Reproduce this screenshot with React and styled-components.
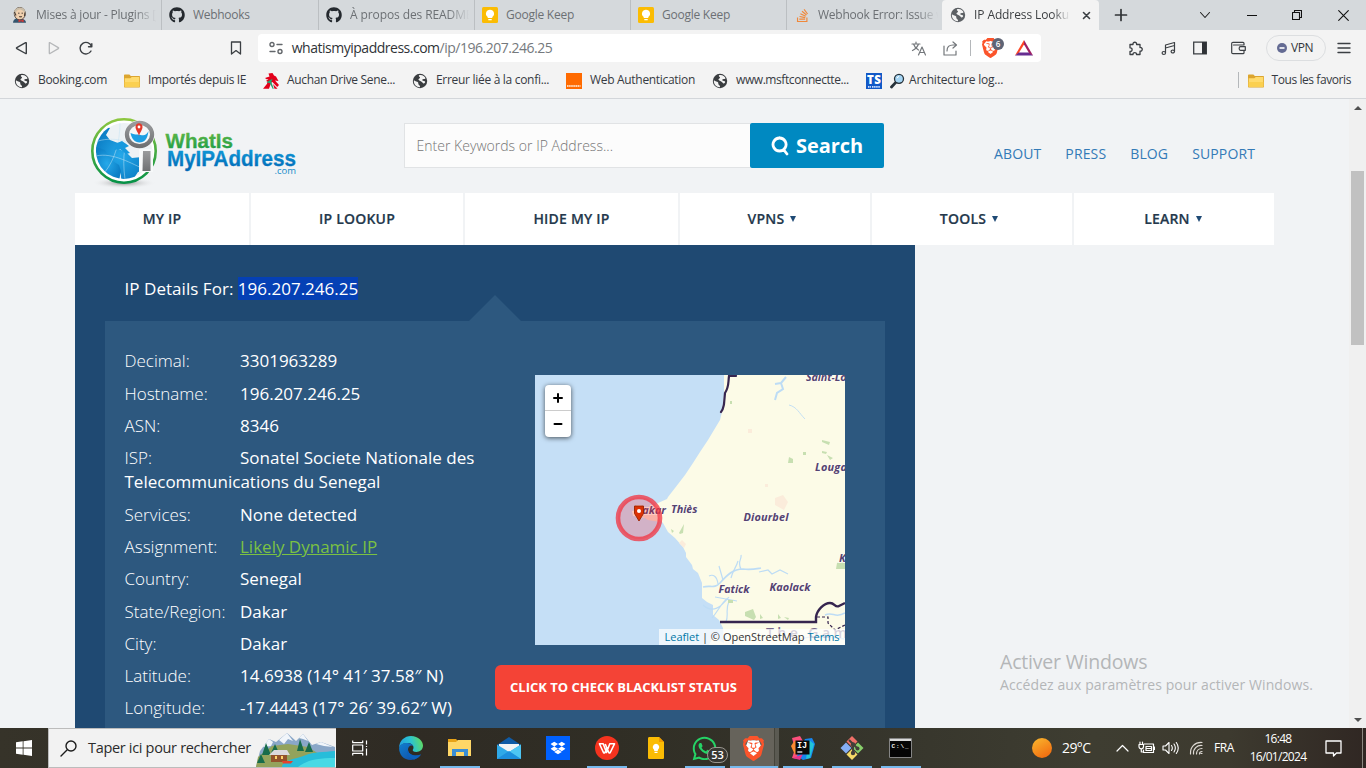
import React from "react";
import styled, { createGlobalStyle } from "styled-components";
import { FaGithub, FaDropbox, FaWhatsapp, FaStackOverflow } from "react-icons/fa6";
import { SiBrave } from "react-icons/si";

const ui = `"Open Sans", "Noto Sans", sans-serif`;
const uiSys = `"Noto Sans", "Open Sans", sans-serif`;

const GlobalStyle = createGlobalStyle`
  * { box-sizing: border-box; }
  body { margin: 0; overflow: hidden; font-family: ${ui}; }
  svg { display: block; flex: none; }
`;

const Screen = styled.div`
  width: 1366px;
  height: 768px;
  display: flex;
  flex-direction: column;
  background: #f1f3f5;
  overflow: hidden;
`;

/* ---------- browser chrome ---------- */
const TabStrip = styled.div`
  height: 30px;
  flex: none;
  display: flex;
  background: #d5d9dc;
`;
const Tab = styled.div`
  width: ${(p) => p.$w}px;
  height: 30px;
  padding-left: ${(p) => p.$pad}px;
  display: flex;
  align-items: center;
  color: #6c7074;
  font: 12px/30px ${ui};
  border-right: ${(p) => (p.$active || p.$last ? "none" : "1px solid #bbbfc2")};
  background: ${(p) => (p.$active ? "#f3f3f3" : "transparent")};
  border-radius: ${(p) => (p.$active ? "4px 4px 0 0" : "0")};
`;
const TabTitle = styled.span`
  margin-left: ${(p) => p.$gap || 8}px;
  width: ${(p) => p.$w}px;
  overflow: hidden;
  white-space: nowrap;
  letter-spacing: ${(p) => p.$ls || 0}px;
  color: ${(p) => (p.$active ? "#3c3f42" : "inherit")};
  mask-image: ${(p) => (p.$fade ? "linear-gradient(90deg, #000 82%, transparent)" : "none")};
`;
const TabClose = styled.span`
  margin-left: 12px;
`;
const NewTab = styled.div`
  margin-left: 15px;
  display: flex;
  align-items: center;
`;
const WindowControls = styled.div`
  margin-left: auto;
  display: flex;
  align-items: center;
  gap: 35.7px;
  padding-right: 17px;
`;
const Toolbar = styled.div`
  height: 36px;
  flex: none;
  display: flex;
  align-items: center;
  background: #f3f3f3;
`;
const NavButtons = styled.div`
  width: 258px;
  display: flex;
  align-items: center;
  padding: 0 16px 0 15px;
  gap: 19.5px;
`;
const Spring = styled.div`
  flex: 1;
`;
const AddressBar = styled.div`
  width: 784px;
  height: 28px;
  padding: 0 8px 0 11px;
  display: flex;
  align-items: center;
  background: #fff;
  border-radius: 4px;
`;
const Url = styled.span`
  margin-left: 9px;
  font: 14px/28px ${ui};
  letter-spacing: -0.49px;
  color: #75797d;
  white-space: nowrap;
  & b { font-weight: 400; color: #303438; }
`;
const UrlActions = styled.div`
  margin-left: auto;
  display: flex;
  align-items: center;
`;
const VSep = styled.div`
  width: 1px;
  height: 16px;
  margin: ${(p) => p.$m || "0 11px 0 12px"};
  background: #b4b7ba;
`;
const Shield = styled.div`
  position: relative;
  width: 20px;
  height: 20px;
  margin-right: 13px;
`;
const ShieldBadge = styled.span`
  position: absolute;
  left: 10px;
  top: 0;
  width: 12px;
  height: 12px;
  border-radius: 6px;
  background: #5f6475;
  color: #fff;
  font: 600 8px/12px ${ui};
  text-align: center;
`;
const Extensions = styled.div`
  flex: 1;
  display: flex;
  align-items: center;
  padding: 0 15px 0 87px;
`;
const Gap = styled.i`
  width: ${(p) => p.$w}px;
`;
const VpnPill = styled.div`
  width: 60px;
  height: 26px;
  border: 1px solid #dcdee0;
  border-radius: 13px;
  display: flex;
  align-items: center;
  padding-left: 10px;
  gap: 4px;
  font: 12px/24px ${ui};
  letter-spacing: -0.4px;
  color: #33373b;
`;
const Bookmarks = styled.div`
  height: 33px;
  flex: none;
  display: flex;
  align-items: center;
  padding: 0 15px 4px 14px;
  background: #f3f3f3;
  border-bottom: 1px solid #d3d6da;
`;
const Bookmark = styled.div`
  display: flex;
  align-items: center;
  gap: ${(p) => p.$gap || 8}px;
  width: ${(p) => p.$w}px;
  font: 12px/20px ${ui};
  letter-spacing: ${(p) => p.$ls || 0}px;
  white-space: nowrap;
  color: #363a42;
  & svg { margin-top: 1px; }
`;

/* ---------- web page ---------- */
const Viewport = styled.div`
  flex: 1;
  min-height: 0;
  display: flex;
`;
const Page = styled.main`
  width: 1349px;
  position: relative;
  padding-left: 75px;
  overflow: hidden;
`;
const Header = styled.header`
  height: 94px;
  width: 1199px;
  display: flex;
`;
const LogoBox = styled.div`
  width: 329px;
  padding: 17px 0 0 14px;
`;
const SearchForm = styled.div`
  display: flex;
  height: 45px;
  margin-top: 24px;
`;
const SearchInput = styled.div`
  width: 346px;
  height: 45px;
  padding-left: 11.5px;
  background: #fcfcfc;
  border: 1px solid #e1e3e5;
  border-right: none;
  font: 300 14px/43px ${ui};
  letter-spacing: 0.02px;
  color: #757575;
`;
const SearchButton = styled.div`
  width: 134px;
  height: 45px;
  padding-left: 21px;
  display: flex;
  align-items: center;
  gap: 7px;
  border-radius: 2px;
  background: #0089c1;
  color: #fff;
  font: 700 20px/45px ${ui};
  letter-spacing: -0.05px;
`;
const TopLinks = styled.nav`
  display: flex;
  margin: 43px 0 0 110px;
  gap: 24px;
  font: 500 14px/24px ${ui};
  letter-spacing: 0.13px;
  color: #337ab7;
`;
const MainNav = styled.nav`
  display: flex;
  gap: 2px;
  height: 52px;
`;
const NavItem = styled.div`
  width: ${(p) => p.$w}px;
  display: flex;
  justify-content: center;
  align-items: center;
  gap: 6px;
  background: #fff;
  color: #24384c;
  font: 600 14px/52px ${ui};
  letter-spacing: 0.2px;
  -webkit-text-stroke: 0.2px #24384c;
  padding-right: ${(p) => p.$pr || 0}px;
`;
const Caret = styled.i`
  border: 3.5px solid transparent;
  border-top: 6px solid #1f4a75;
  border-bottom: none;
`;
const Result = styled.section`
  width: 840px;
  height: 483px;
  padding: 32px 30px 0;
  background: #1f4972;
`;
const ResultTitle = styled.div`
  height: 44px;
  padding-left: 19.5px;
  font: 400 17px/24px ${ui};
  letter-spacing: 0.04px;
  color: #fff;
`;
const Selected = styled.span`
  background: #0540b5;
  letter-spacing: 0;
`;
const Panel = styled.div`
  position: relative;
  height: 407px;
  display: flex;
  background: #2d587f;
  padding: 28px 0 0 19.5px;
  &::before {
    content: "";
    position: absolute;
    top: -26px;
    left: 364px;
    border: 26px solid transparent;
    border-top: none;
    border-bottom-color: #2d587f;
  }
`;
const Details = styled.div`
  width: 370.5px;
  padding-top: 0.35px;
`;
const Row = styled.p`
  margin: 0 0 8px;
  color: #fff;
  font: 400 17px/24.28px ${ui};
`;
const Label = styled.span`
  display: inline-block;
  width: 115.5px;
  font-weight: 300;
`;
const Link = styled.span`
  color: #7bc143;
  text-decoration: underline;
`;
const MapColumn = styled.div`
  padding-top: 26px;
`;
const MapFrame = styled.div`
  position: relative;
  width: 310px;
  height: 270px;
  margin-left: 40px;
  overflow: hidden;
`;
const Zoom = styled.div`
  position: absolute;
  left: 10px;
  top: 10px;
  width: 26px;
  height: 52px;
  border-radius: 4px;
  background: #fff;
  box-shadow: 0 1px 5px rgba(0, 0, 0, 0.65);
`;
const ZoomButton = styled.div`
  height: 26px;
  border-bottom: ${(p) => (p.$line ? "1px solid #ccc" : "none")};
  display: flex;
  align-items: center;
  justify-content: center;
`;
const Attribution = styled.div`
  position: absolute;
  right: 0;
  bottom: 0;
  width: 186px;
  height: 16px;
  padding-left: 5.5px;
  background: rgba(255, 255, 255, 0.7);
  font: 11px/16px ${ui};
  letter-spacing: 0;
  color: #333;
  white-space: nowrap;
  & a { color: #0078a8; }
`;
const Blacklist = styled.div`
  width: 257px;
  height: 45px;
  margin-top: 20px;
  border-radius: 6px;
  background: #f44336;
  color: #fff;
  font: 700 13px/45px ${ui};
  letter-spacing: -0.01px;
  text-align: center;
`;
const Scrollbar = styled.div`
  width: 17px;
  display: flex;
  flex-direction: column;
  align-items: center;
  padding: 7px 0 6px;
  background: #f0f0f0;
`;
const Arrow = styled.i`
  border: 4px solid transparent;
  ${(p) => (p.$down ? "border-top-color: #505050; border-bottom: none;" : "border-bottom-color: #505050; border-top: none;")}
`;
const Thumb = styled.div`
  width: 13px;
  height: 174px;
  margin: 61px 0 auto;
  background: #c1c1c1;
`;
const Watermark = styled.div`
  position: absolute;
  left: 1000px;
  top: 550px;
  white-space: nowrap;
  color: #b4b6b8;
  font: 14px/20px ${ui};
  letter-spacing: 0.09px;
`;
const WatermarkTitle = styled.div`
  font: 19.5px/26px ${ui};
  letter-spacing: -0.2px;
`;

/* ---------- taskbar ---------- */
const Taskbar = styled.footer`
  height: 40px;
  flex: none;
  display: flex;
  background: linear-gradient(90deg, #363329 0%, #2f2b24 30%, #302e25 45%, #35342b 62%, #3e3d31 80%, #3d3a2f 90%, #302723 100%);
  color: #fff;
`;
const Start = styled.div`
  width: 48px;
  display: flex;
  align-items: center;
  justify-content: center;
`;
const TaskSearch = styled.div`
  width: 288px;
  height: 40px;
  display: flex;
  align-items: center;
  background: #f2f2f2;
  border: 1px solid #bcbcbc;
  border-width: 1px 0 1px 1px;
  padding-left: 11px;
  color: #2b2b2b;
  font: 14.5px/38px ${ui};
  letter-spacing: -0.32px;
  white-space: nowrap;
`;
const TaskSearchText = styled.span`
  width: 168px;
  margin-left: 11px;
`;
const TaskIcon = styled.div`
  position: relative;
  width: 49px;
  height: 40px;
  padding-right: 2px;
  display: flex;
  align-items: center;
  justify-content: center;
  background: ${(p) => (p.$focus ? "linear-gradient(90deg, #66635b 0 44px, #45443b 44px 45px, #5b5a52 45px)" : "none")};
  &::after {
    content: "";
    position: absolute;
    left: ${(p) => (p.$focus ? 0 : 4)}px;
    bottom: 0;
    width: ${(p) => (p.$focus ? 48 : 40)}px;
    height: 2px;
    background: ${(p) => (p.$open ? "#76b9ed" : "transparent")};
  }
`;
const CountBadge = styled.span`
  position: absolute;
  left: 26px;
  top: 19px;
  width: 21px;
  height: 16px;
  border: 1px solid #99968f;
  border-radius: 8px;
  background: #383732;
  font: 600 11px/14px ${ui};
  text-align: center;
`;
const Tray = styled.div`
  margin-left: auto;
  display: flex;
  align-items: center;
  font: 12px/18px ${uiSys};
  letter-spacing: -0.4px;
`;
const Temp = styled.span`
  width: 54px;
  margin-left: 10px;
  font: 14px/40px ${ui};
  letter-spacing: -0.6px;
`;
const Lang = styled.span`
  width: 34px;
  margin-left: 11px;
  font-family: ${ui};
`;
const Clock = styled.div`
  width: 60px;
  text-align: center;
  font: 12px/18px ${ui};
  letter-spacing: -0.7px;
  white-space: nowrap;
`;
const DesktopEdge = styled.div`
  width: 4px;
  height: 40px;
  margin-left: 20px;
  border-left: 1px solid #8b8780;
`;

/* ---------- icons ---------- */
const Globe = ({ c = "#3a3d40" }) => (
  <svg width="16" height="16" viewBox="0 0 16 16">
    <circle cx="8" cy="8" r="7.200" fill={c} />
    <path d="M1.900 7.200c1.600 1.600 3.300.9 4.100 2.100.7 1-.2 1.900 1 2.600.9.600 1.200 1.200 1 2.300-3.700 0-6.600-3.200-6.100-7Z" fill="#f3f3f3" />
    <path d="M7 2.200c3-.8 5.600.9 6.600 3.100-1.300 1.300-2.600.4-3.200 1.300-.5.800.2 1.400 1.500 1.400 1.500 0 1.600 1.200.7 2.100-1 1.100-1.600-.3-2.800-1.200C8.600 8 7.600 8.200 6.700 7.100 5.900 6.100 7.200 5.600 7.900 4.900c.8-.9-1.700-1.200-.9-2.700Z" fill="#f3f3f3" />
  </svg>
);
const Keep = () => (
  <svg width="16" height="16" viewBox="0 0 16 16">
    <rect width="16" height="16" rx="1.500" fill="#fbbc04" />
    <path d="M8 2.700a4 4 0 0 0-2.300 7.300v1h4.600v-1A4 4 0 0 0 8 2.700Z M6.300 11.900h3.400v1.300H6.300Z" fill="#fff" />
  </svg>
);
const Folder = () => (
  <svg width="16" height="16" viewBox="0 0 16 16">
    <path d="M0 2.600c0-.7.400-1 1-1h4.400l1.400 1.500h8.200c.6 0 1 .4 1 1V13.500c0 .6-.4 1-1 1H1c-.6 0-1-.4-1-1Z" fill="#dca52f" />
    <path d="M.7 5.200h5.600L7.800 4h7.500v9.700H.7Z" fill="#ffdb6d" />
    <path d="M.7 9h14.600v4.700H.7Z" fill="#fbd050" />
  </svg>
);
const Jenkins = () => (
  <svg width="16" height="16" viewBox="0 0 16 16">
    <path d="M1 15.800c0-2 1-3.600 3-4.300l7 .5c2 .7 2.900 2 3 3.800Z" fill="#34556e" />
    <ellipse cx="7.800" cy="6.600" rx="5.600" ry="6.200" fill="#efcfad" stroke="#4b3f37" strokeWidth=".8" />
    <path d="M2.200 8C1 3.500 4 .4 8 .4c4 .1 6 3 5.300 7.200L11.300 4C8.500 1.600 5.500 2 4 5Z" fill="#c9bda8" />
    <path d="M2.300 5 4 8.500M13 5.500 12.500 9" stroke="#4b3f37" strokeWidth="1.200" />
    <path d="M6 6.200h1.500M9.500 6.200H11M7 9.600c1 .5 2 .5 3 0" stroke="#4b3f37" strokeWidth=".9" />
    <path d="M6.500 12.200l2.500 1.200 2.600-1.200v3l-2.600-1-2.500 1Z" fill="#d33833" />
  </svg>
);
const Auchan = () => (
  <svg width="16" height="16" viewBox="0 0 16 16">
    <path d="M5.500.5 9.500 0l1.500 2.500 2 1L15.500 8 12 7.500l4 4.500-1.800 2-4.800-5L4 11.500l.5-3L3 8l2.500-2-2 .2L2 5l4.500-1.500Z" fill="#e2001a" />
    <path d="M0 15.700 4.300 10.500 8.500 9 6 15.700Z" fill="#e2001a" />
    <path d="M3.500 9.300 9.500 5.800 8.300 9l2.500 6.700H9.600L6.900 10.200Z" fill="#1fa774" />
    <path d="m10 11 4.500 4.700h-3Z" fill="#e2001a" />
  </svg>
);
const OrangeSq = () => (
  <svg width="16" height="16" viewBox="0 0 16 16">
    <path d="M0 0h16v16H0Z" fill="#ff6a00" />
    <path d="M1 13h13.500" stroke="#ffd3b0" strokeWidth="2" strokeDasharray="1.600 .5" />
  </svg>
);
const TsIcon = () => (
  <svg width="16" height="16" viewBox="0 0 16 16">
    <path d="M0 0h16v16H0Z" fill="#1259c7" />
    <text x="8" y="11" textAnchor="middle" fill="#fff" fontFamily="Open Sans" fontWeight="800" fontSize="11.500" textLength="14">TS</text>
    <path d="M2 13.800h3M6 13.800h8" stroke="#cfe0ff" strokeWidth="1.800" strokeDasharray="1.500 .6" />
  </svg>
);
const Magnifier = () => (
  <svg width="15" height="16" viewBox="0 0 15 16">
    <path d="m1.500 14 4.300-4.600" stroke="#27323a" strokeWidth="2.800" strokeLinecap="round" />
    <circle cx="9" cy="5.800" r="4.500" fill="#a5d5f4" stroke="#27323a" strokeWidth="1.300" />
    <path d="M7 5.200c.3-1 1-1.600 2-1.700" stroke="#fff" fill="none" />
  </svg>
);
const Line = ({ w = 16, h = 16, d, c = "#3b3f43", s = 1.3, ...r }) => (
  <svg width={w} height={h} viewBox={`0 0 ${w} ${h}`} fill="none" stroke={c} strokeWidth={s} strokeLinecap="round" strokeLinejoin="round" {...r}>
    <path d={d} />
  </svg>
);
const BraveMark = ({ w, h }) => (
  <svg width={w} height={h} viewBox="0 0 20 24">
    <path d="M5 4h10l2 5-3 9-4 3-4-3-3-9Z" fill="#fff" />
    <SiBrave x="-2" y="0" size={24} color="#fb542b" />
  </svg>
);

const WimiaLogo = () => (
  <svg width="210" height="76" viewBox="0 0 210 76">
    <defs>
      <linearGradient id="ring" x1="0" y1="0" x2="0" y2="1"><stop offset="0" stopColor="#8cc63f" /><stop offset="1" stopColor="#069247" /></linearGradient>
      <linearGradient id="what" x1="0" y1="0" x2="0" y2="1"><stop offset="0" stopColor="#6dbb45" /><stop offset="1" stopColor="#189c48" /></linearGradient>
      <linearGradient id="myip" x1="0" y1="0" x2="0" y2="1"><stop offset="0" stopColor="#129fdb" /><stop offset="1" stopColor="#0068b5" /></linearGradient>
      <radialGradient id="shade"><stop offset="0" stopColor="#8c8c8c" /><stop offset="1" stopColor="#f1f3f5" stopOpacity="0" /></radialGradient>
      <radialGradient id="sea"><stop offset="0" stopColor="#25a9ea" /><stop offset="1" stopColor="#0c7fc6" /></radialGradient>
      <linearGradient id="steel" x1="0" y1="0" x2="0" y2="1"><stop offset="0" stopColor="#9a9b9d" /><stop offset="1" stopColor="#6f7173" /></linearGradient>
      <clipPath id="ball"><circle cx="35" cy="35" r="28" /></clipPath>
    </defs>
    <ellipse cx="35" cy="67" rx="32" ry="5.500" fill="url(#shade)" />
    <circle cx="35" cy="35" r="31.700" fill="#fff" stroke="url(#ring)" strokeWidth="2.600" />
    <circle cx="35" cy="35" r="28" fill="#edf2f5" />
    <g clipPath="url(#ball)">
      <path d="M5 36c0-10 4-19 12-25l4 1-4 7 4 5 8 3 1 6 8 4 5 5 10-1 5 4-1 9-8 2-4 6-1 5-9 1c-5-5-1-9-5-13-3-3-9-4-10-9l-4-6-6-3Z" fill="url(#sea)" />
      <path d="M4 30l12 4 6 10 8 5 2 6-2 10C12 60 3 45 4 30Z" fill="url(#sea)" />
      <path d="M7 40c17-4 36 8 50 14M16 56c10-13 15-30 15-50M9 25c17-5 38 1 52 13M36 63c-3-22-1-40 10-54" stroke="#c4e5f5" strokeWidth=".5" fill="none" />
      <path d="M28 27l5-2 7 5-4 2 5 5-4 1-6-5-6 1Z" fill="#1799de" />
    </g>
    <rect x="50" y="33" width="14" height="23" fill="#f7f9fa" />
    <path d="M54 35h7.500v20H53.500Z" fill="url(#steel)" />
    <ellipse cx="50.500" cy="18.500" rx="15.300" ry="14.300" fill="#f7f9fa" />
    <ellipse cx="50.500" cy="18.500" rx="12.600" ry="11.600" fill="#f5f7f8" stroke="url(#steel)" strokeWidth="4.200" />
    <path d="M41.500 17c4 2 6 1 10 2 4 1 6 0 8-4-1 8-4 11.500-9 11.500s-8-4-9-9.500Z" fill="#1d9fe3" />
    <path d="M46.500 11c0-5 7-5 7 0 0 3-2.500 5-3.500 9-1-4-3.500-6-3.500-9Z" fill="#e2382a" />
    <circle cx="50" cy="11" r="1.400" fill="#fff" />
    <text x="76.500" y="31.500" fill="url(#what)" stroke="url(#what)" strokeWidth=".3" strokeLinejoin="round" fontFamily="Liberation Sans" fontWeight="700" fontSize="20.500" textLength="67.500" lengthAdjust="spacingAndGlyphs">WhatIs</text>
    <text x="78" y="49.500" fill="url(#myip)" stroke="url(#myip)" strokeWidth=".3" strokeLinejoin="round" fontFamily="Liberation Sans" fontWeight="700" fontSize="21.500" textLength="129" lengthAdjust="spacingAndGlyphs">MyIPAddress</text>
    <text x="185.500" y="57.800" fill="#168cc9" fontFamily="Open Sans" fontSize="9.500" textLength="21.500" lengthAdjust="spacingAndGlyphs">.com</text>
  </svg>
);

const MapLabel = styled.text`
  font: italic 700 11px ${ui};
  fill: #554372;
  stroke: #fdfbee;
  stroke-width: 2px;
  paint-order: stroke;
`;
const SenegalMap = () => (
  <svg width="310" height="270" viewBox="0 0 310 270">
    <path d="M0 0h310v270H0Z" fill="#c5dff6" />
    <path d="M189 0V20L187 37 185 45 173 65 165 77 158 88 150 100 140 113 133 122 132 124 123 128 117 133 97 136 98 141 112 143 122 142 128 148 133 157 140 163 148 172 151 178 151 182 157 190 158 194 163 198 167 208 167 223 172 227 178 230 178 240 184 245 188 253 189 268 178 262 174 270H310V0Z" fill="#fcfbe7" />
    <path d="M108 137l14 0 3 10-12-2-8-5Z" fill="#f8dccb" />
    <g fill="none" stroke="#bddcf5" strokeWidth="1.200">
      <path d="M251 2 246 8 248 14 242 18 240 25M246 8l-6 1" strokeWidth="2" />
      <path d="M254 30c8 2 10 8 16 14" strokeWidth=".9" />
      <path d="M168 212c8-2 11 2 17-4 7-8 13-14 23-14 8 1 12 0 18-1" strokeWidth="1.700" />
      <path d="M196 203c2-8 5-10 7-17M183 209c-1-8-5-10-9-8M188 205l-4-14M206 194c-4-7 1-10 0-14M224 197l9-2 4 4 8-4 8 4M168 230c10 9 18 2 26-8M177 243c7-8 9-15 16-20M194 226c-4 10 0 13-3 21M180 222l22 4" />
      <path d="M290 240c8-4 10 4 20-2M255 268c16-8 30-7 55-4" strokeWidth="1.500" />
    </g>
    <g fill="#c7dfb1">
      <path d="M254 82l4 2v4h-5ZM287 65l8 2-1 3-7-3ZM287 76l5 1-1 2-4-1ZM268 77h3v3h-3ZM292 80l6 3-3 2ZM302 188l8-3v9h-9ZM210 237l8-3 3 8-2 3-9-4ZM193 225h5v3h-5ZM225 239l3 4-3 1ZM243 239l3 4-3 1ZM249 242l5 1-1 2ZM144 158l5-9-1 9-3 1ZM136 154l3 2-2 2ZM195 26h2v3h-2Z" />
    </g>
    <path d="m240 123 8-3 5 7-4 8-9-5ZM213 54h4v4h-4ZM230 109h3v3h-3ZM147 165l4 4-2 4-5-5Z" fill="#fbecdb" />
    <path d="M201 1h-7c-1 8 0 11-4 17l-1 11c-1 5-1 6-3 8" fill="none" stroke="#36254f" strokeWidth="2.200" strokeLinecap="round" />
    <path d="M185 247h96V242c1-7 8-14 14-14 5 0 5 5 9 3l6-3" fill="none" stroke="#36254f" strokeWidth="2.400" />
    <path d="M282 242h11v6l7 7 10-5" fill="none" stroke="#36254f" strokeWidth="1.200" strokeDasharray="3 2" />
    <MapLabel x="271" y="6" textLength="55">Saint-Louis</MapLabel>
    <MapLabel x="280" y="96" textLength="32">Louga</MapLabel>
    <MapLabel x="136" y="137.500" textLength="26.500">Thiès</MapLabel>
    <MapLabel x="208.500" y="146" textLength="45">Diourbel</MapLabel>
    <MapLabel x="304" y="187">K</MapLabel>
    <MapLabel x="183.500" y="217.500" textLength="31">Fatick</MapLabel>
    <MapLabel x="234.500" y="215.500" textLength="41">Kaolack</MapLabel>
    <MapLabel x="100" y="139" textLength="31">Dakar</MapLabel>
    <text x="231" y="263" fill="#7a688d" fontFamily="Open Sans" fontSize="14" fontWeight="600" textLength="112">The Gambia</text>
    <circle cx="104" cy="143" r="21" fill="#ff1e2d" fillOpacity=".23" />
    <circle cx="104" cy="143" r="21" fill="none" stroke="#f2313f" strokeOpacity=".75" strokeWidth="4.600" />
    <path d="M99.500 131h9v7.500l-4.500 7.500-4.500-7.500Z" fill="#dc3104" stroke="#992400" strokeWidth=".9" />
    <circle cx="104" cy="136" r="2" fill="#fff" />
  </svg>
);

const SearchScene = () => (
  <svg width="79" height="38" viewBox="0 0 79 38">
    <path d="M4 22 13 10 20 13 31 4 40 12 47 5 56 16 65 13 79 18V38H0Z" fill="#8aa7c8" />
    <path d="m7 18 6-8 4 3-2 4ZM23 11l8-7 6 8-5-2-4 5ZM43 9l4-4 5 7-5-2ZM60 15l5-2 12 5-9-1Z" fill="#f1f5fa" />
    <path d="M2 28 16 17 32 15 52 18 63 25 40 38H0Z" fill="#93a35c" />
    <path d="M26 38c0-7 14-8 24-12 7-3 18-3 29-4v16Z" fill="#27bdda" />
    <path d="M42 38c9-7 20-9 37-9v9Z" fill="#48d9e5" />
    <path d="m10 14 5 12H6ZM5 25l4 9H1ZM19 15l4 9h-8ZM44 10l4 12h-7ZM53 13l4 10h-8Z" fill="#176c4b" />
    <path d="M15 25h16v8H15Z" fill="#93522b" />
    <path d="m13 26 5-5h13l3 5Z" fill="#dcd9dc" />
    <path d="M19 27h2v3h-2ZM25 27h2v3h-2Z" fill="#ffd36b" />
    <path d="M26 32h11l-2 2.500h-8Z" fill="#e5412e" />
  </svg>
);
const Edge = () => (
  <svg width="24" height="24" viewBox="0 0 24 24">
    <defs>
      <linearGradient id="edgeTop" x1="0" y1=".5" x2="1" y2=".3"><stop offset="0" stopColor="#219fe0" /><stop offset=".5" stopColor="#2bc3d2" /><stop offset="1" stopColor="#63dc5c" /></linearGradient>
      <linearGradient id="edgeLow" x1="0" y1="0" x2="1" y2="1"><stop offset="0" stopColor="#0f7fd0" /><stop offset="1" stopColor="#1348a0" /></linearGradient>
    </defs>
    <path d="M.1 12C.1 4.800 5.600 0 12 0c7.500 0 12 5.200 12 9.600 0 4.400-3.300 6.400-6.600 6.400-3 0-4-1.200-3.600-2.200.5-.9.7-1.500.7-2.400 0-2.500-2.400-4.500-6-4.500C4 6.900 1 9 .1 12Z" fill="url(#edgeTop)" />
    <path d="M.1 12c.6-3.300 4-5.100 8.100-5.100 3.200 0 5.400 1.500 6.100 3.200-2.500-1.700-5.300.3-5.300 3.500 0 4.700 5.700 7.400 12.900 4.900A12 12 0 0 1 12 24C4.500 24 0 18.500.1 12Z" fill="url(#edgeLow)" />
    <path d="M9 13.500c0 4.800 6 7.600 13 5-1.200 2.200-4 4.100-6.700 4.900C9 22 6.500 17 9 13.500Z" fill="#0b61bd" />
  </svg>
);
const Explorer = () => (
  <svg width="24" height="20" viewBox="0 0 24 20">
    <path d="M0 1h8l2 2h-1v3H0Z" fill="#e8a317" />
    <path d="M0 4h8l2-2h13v16H0Z" fill="#ffd767" />
    <path d="M4 18v-7h16v7h-4v-4H8v4Z" fill="#3b8ed4" />
  </svg>
);
const Mail = () => (
  <svg width="24" height="22" viewBox="0 0 24 22">
    <path d="M0 8 12 0l12 8H0Z" fill="#0f5ba6" />
    <path d="M2 7h20v9H2Z" fill="#f2f4f5" />
    <path d="M0 7.500 12 15l12-7.500V22H0Z" fill="#2fa9e8" />
    <path d="M24 7.500V22L12 15Z" fill="#4ec6f3" />
    <path d="M0 22 12 14l12 8Z" fill="#1d8fdd" />
  </svg>
);
const Wps = () => (
  <svg width="24" height="24" viewBox="0 0 24 24">
    <circle cx="12" cy="12" r="12" fill="#f5331e" />
    <path d="M3.800 7.800h4.400l3.300 8.700 3.300-8.700h4.700l-4.500 9.200h-1L10.200 8M4.500 8l4.200 9h1l2-4.500" fill="none" stroke="#fff" strokeWidth="1.600" strokeLinejoin="round" />
  </svg>
);
const KeepApp = () => (
  <svg width="16" height="22" viewBox="0 0 16 22">
    <path d="M1.500 0H11l5 5v15.500c0 1-.6 1.500-1.500 1.500h-13C.6 22 0 21.500 0 20.500v-19C0 .5.600 0 1.500 0Z" fill="#fbbc04" />
    <path d="M11 0l5 5h-5Z" fill="#f29900" />
    <path d="M8 6.800a3.400 3.400 0 0 0-1.800 6.200v1h3.600v-1A3.400 3.400 0 0 0 8 6.800ZM6.500 14.700h3V16h-3Z" fill="#fff" />
  </svg>
);
const Idea = () => (
  <svg width="24" height="24" viewBox="0 0 24 24">
    <path d="M1 2 9 0l6 10-9 13-5-1 3-9Z" fill="#fc4f7d" />
    <path d="M0 10 4 4l5 6-5 9Z" fill="#fd8a33" />
    <path d="m14 3 7-1 3 6-4 14-8 2-6-4Z" fill="#1786ef" />
    <path d="m18 4 5 4-4 14-4 1Z" fill="#22c4d7" />
    <path d="M2 22l10-4-3 6Z" fill="#e4338d" />
    <path d="M4.500 4.500h14v14h-14Z" fill="#0a0a0a" />
    <text x="6" y="11.800" fill="#fff" fontFamily="Liberation Mono" fontWeight="700" fontSize="8.500">IJ</text>
    <path d="M6.300 16h5" stroke="#fff" strokeWidth="1.200" />
  </svg>
);
const Git = () => (
  <svg width="26" height="26" viewBox="0 0 26 26">
    <path d="m13 1 5.500 5.500L13 12 7.500 6.500Z" fill="#f07068" />
    <path d="m19 7.500 5.500 5.500-5.500 5.500-5.500-5.500Z" fill="#88cf6b" />
    <path d="m13 14 5.500 5.500L13 25l-5.500-5.500Z" fill="#f6da68" />
    <path d="M7 7.500 12.500 13 7 18.500 1.500 13Z" fill="#85aef5" />
    <path d="m10 5 4 4v9M14 9l4.500 4.500" stroke="#433f3a" strokeWidth="2" fill="none" />
    <circle cx="14" cy="9.500" r="2.200" fill="#433f3a" /><circle cx="14" cy="18" r="2.200" fill="#433f3a" /><circle cx="18.500" cy="13.500" r="2" fill="#433f3a" />
  </svg>
);
const Terminal = () => (
  <svg width="23" height="20" viewBox="0 0 23 20">
    <path d="M.5.500h22v19H.5Z" fill="#050505" stroke="#858585" />
    <path d="M1 1h21v2H1Z" fill="#d9d9d9" />
    <text x="2.500" y="9.500" fill="#f0f0f0" fontFamily="Liberation Mono" fontWeight="700" fontSize="6" textLength="17">C:\_</text>
  </svg>
);
const Sun = styled.i`
  width: 20px;
  height: 20px;
  border-radius: 50%;
  background: linear-gradient(150deg, #f9b92f, #f1620c);
`;

const inactiveTabs = [
  [162, 12, <Jenkins />, "Mises à jour - Plugins [Jenkins]", 120, true, -0.2, 8],
  [157, 7, <FaGithub size={16} color="#24292e" />, "Webhooks", 120, false, -0.3, 8],
  [156, 7, <FaGithub size={16} color="#24292e" />, "À propos des README", 119, true, -0.1, 8],
  [156, 7, <Keep />, "Google Keep", 120, false, -0.25, 8],
  [156, 7, <Keep />, "Google Keep", 120, false, -0.25, 8],
  [155, 8, <FaStackOverflow size={15} color="#f0883a" />, "Webhook Error: Issue with", 120, true, -0.25, 8],
];
const bookmarks = [
  [110, <Globe />, "Booking.com", -0.33],
  [139, <Folder />, "Importés depuis IE", -0.35],
  [149, <Auchan />, "Auchan Drive Sene...", -0.32],
  [154, <Globe />, "Erreur liée à la confi...", -0.3],
  [146, <OrangeSq />, "Web Authentication", -0.31],
  [154, <Globe />, "www.msftconnectte...", -0.42],
  [24, <TsIcon />, "", 0],
  [150, <Magnifier />, "Architecture log...", -0.2, 4],
];
const navItems = [
  [174, "MY IP"], [212, "IP LOOKUP"], [213, "HIDE MY IP"],
  [190, "VPNS", 1, 6], [200, "TOOLS", 1, 6], [200, "LEARN", 1, 2],
];
const rows = [
  ["Decimal:", "3301963289"],
  ["Hostname:", "196.207.246.25"],
  ["ASN:", "8346"],
  ["ISP:", "Sonatel Societe Nationale des Telecommunications du Senegal"],
  ["Services:", "None detected"],
  ["Assignment:", <Link key="l">Likely Dynamic IP</Link>],
  ["Country:", "Senegal"],
  ["State/Region:", "Dakar"],
  ["City:", "Dakar"],
  ["Latitude:", "14.6938 (14° 41′ 37.58″ N)"],
  ["Longitude:", "-17.4443 (17° 26′ 39.62″ W)"],
];

export default function App() {
  return (
    <Screen>
      <GlobalStyle />
      <TabStrip>
        {inactiveTabs.map(([w, pad, icon, title, tw, fade, ls, gap], i) => (
          <Tab key={i} $w={w} $pad={pad} $last={i === 5}>
            {icon}
            <TabTitle $w={tw} $fade={fade} $ls={ls} $gap={gap}>{title}</TabTitle>
          </Tab>
        ))}
        <Tab $w={157} $pad={8} $active>
          <Globe c="#5c6064" />
          <TabTitle $w={96} $fade $active $ls={-0.1}>IP Address Lookup</TabTitle>
          <TabClose><Line w={9} h={9} d="M1.500 1.500l6 6M7.500 1.500l-6 6" s={1.600} /></TabClose>
        </Tab>
        <NewTab><Line w={14} h={14} d="M7 1.500v11M1.500 7h11" c="#303336" s={1.700} /></NewTab>
        <WindowControls>
          <Line w={12} h={12} d="M1.500 3.500 6 8.500l4.500-5" c="#222" s={1.100} />
          <Line w={10} h={12} d="M0 6.500h10" c="#111" s={1.100} />
          <Line w={10} h={10} d="M.5 2.500h7v7h-7ZM2.500 2.500v-2h7v7h-2" c="#111" s={1.100} />
          <Line w={11} h={11} d="m.7.700 9.600 9.600M10.300.700.700 10.300" c="#111" s={1.100} />
        </WindowControls>
      </TabStrip>
      <Toolbar>
        <NavButtons>
          <Line w={13} h={14} d="M11.300 2v10.200c0 .4-.4.500-.7.300L1.800 7.600c-.5-.3-.5-.7 0-1l8.800-4.900c.4-.2.700 0 .7.300Z" s={1.400} />
          <Line w={12} h={14} d="M1.300 2v10.200c0 .4.400.5.700.3l8.300-4.900c.5-.3.500-.7 0-1L2 1.700c-.4-.2-.7 0-.7.300Z" c="#b5b7b9" />
          <Line w={14} h={14} d="M12.400 5.300A5.800 5.800 0 1 0 12 10M12.800 2.800v3H9.500" s={1.400} />
          <Spring />
          <Line w={12} h={14} d="M1.500 1h9v12L6 9.600 1.500 13Z" s={1.300} />
        </NavButtons>
        <AddressBar>
          <Line w={14} h={14} d="M1 3.500a2 2 0 1 0 4 0 2 2 0 1 0-4 0M8 3.500h5M9 10.500a2 2 0 1 0 4 0 2 2 0 1 0-4 0M1 10.500h5" c="#63676b" s={1.400} />
          <Url><b>whatismyipaddress.com</b>/ip/196.207.246.25</Url>
          <UrlActions>
            <Line w={15} h={15} d="M1 3h8M5 1v2M2.500 3c1 3 3 5 5 6M7.500 3c-1 3-3 5-6 6.500M7.500 14 11 6l3.500 8M8.500 11.500h5" c="#73777b" s={1.200} />
            <Gap $w={17} />
            <Line w={15} h={15} d="M1 5v9h12v-4M4 10c0-4 2-6 6-6h3M10 1l3.500 3L10 7" c="#73777b" s={1.200} />
            <VSep />
            <Shield><BraveMark w={17} h={20} /><ShieldBadge>6</ShieldBadge></Shield>
            <svg width="18" height="16" viewBox="0 0 18 16">
              <path d="M9 0 0 15.500 3.500 13.500 9 4.500Z" fill="#ff4724" />
              <path d="m0 15.500 3.800-3h10.400l3.800 3Z" fill="#662d91" />
              <path d="m9 0 9 15.500-3.700-2L9 4.500Z" fill="#9e1f63" />
            </svg>
          </UrlActions>
        </AddressBar>
        <Extensions>
          <Line w={15} h={15} d="M2 3.500h3c-.4-3 4-3 3.600 0H12v3c3-.4 3 4 0 3.600V13.500H8.500c.3-2.600-3.800-2.600-3.500 0H2v-3c2.800.3 2.800-4 0-3.700Z" />
          <Gap $w={18} />
          <Line w={15} h={15} d="M4.500 12V4l9-2.500v9M4.500 7l9-2.500M4.500 12a1.700 1.500 0 1 1-3.400 0 1.700 1.500 0 1 1 3.400 0M13.500 10.500a1.700 1.500 0 1 1-3.400 0 1.700 1.500 0 1 1 3.400 0" s={1.200} />
          <Gap $w={17} />
          <svg width="14" height="14" viewBox="0 0 14 14"><path d="M.7 1.200h12.600v11.600H.7Z" fill="none" stroke="#3b3f43" strokeWidth="1.300" /><path d="M9 1h4.500v12H9Z" fill="#2f3236" /></svg>
          <Gap $w={24} />
          <Line w={15} h={14} d="M13 4V2.500c0-.8-.4-1.200-1-1.200H2C.9 1.300.7 2 .7 2.500v9c0 .7.400 1.200 1.200 1.200H12c.6 0 1-.4 1-1V10M2.500 4H13M9.500 5.700h4.800v3.600H9.500c-1.800 0-1.800-3.600 0-3.600Z" s={1.200} />
          <Gap $w={20} />
          <VpnPill>
            <svg width="10" height="10" viewBox="0 0 10 10"><circle cx="5" cy="5" r="5" fill="#646b93" /><path d="M2.500 5h5" stroke="#fff" strokeWidth="1.600" /></svg>
            VPN
          </VpnPill>
          <Gap $w={11} />
          <Line w={14} h={12} d="M1 1.500h12M1 6h12M1 10.500h12" s={1.400} />
        </Extensions>
      </Toolbar>
      <Bookmarks>
        {bookmarks.map(([w, icon, text, ls, gap], i) => (
          <Bookmark key={i} $w={w} $ls={ls} $gap={gap}>{icon}{text}</Bookmark>
        ))}
        <Spring />
        <VSep $m="0 9px 0 0" />
        <Bookmark $ls={-0.42}><Folder />Tous les favoris</Bookmark>
      </Bookmarks>
      <Viewport>
        <Page>
          <Header>
            <LogoBox><WimiaLogo /></LogoBox>
            <SearchForm>
              <SearchInput>Enter Keywords or IP Address...</SearchInput>
              <SearchButton>
                <Line w={18} h={20} d="M8.500 2a6.500 6.500 0 1 0 .1 0M12.500 13.500l3.500 4.500" c="#fff" s={2.800} />
                Search
              </SearchButton>
            </SearchForm>
            <TopLinks><span>ABOUT</span><span>PRESS</span><span>BLOG</span><span>SUPPORT</span></TopLinks>
          </Header>
          <MainNav>
            {navItems.map(([w, t, caret, pr]) => (
              <NavItem key={t} $w={w} $pr={pr}>{t}{caret && <Caret />}</NavItem>
            ))}
          </MainNav>
          <Result>
            <ResultTitle>IP Details For: <Selected>196.207.246.25</Selected></ResultTitle>
            <Panel>
              <Details>
                {rows.map(([k, v]) => (
                  <Row key={k}><Label>{k}</Label>{v}</Row>
                ))}
              </Details>
              <MapColumn>
                <MapFrame>
                  <SenegalMap />
                  <Zoom>
                    <ZoomButton $line><Line w={12} h={12} d="M6 2v8M2 6h8" c="#000" s={2} /></ZoomButton>
                    <ZoomButton><Line w={12} h={12} d="M2.500 6h7" c="#000" s={2} /></ZoomButton>
                  </Zoom>
                  <Attribution><a>Leaflet</a> | © OpenStreetMap <a>Terms</a></Attribution>
                </MapFrame>
                <Blacklist>CLICK TO CHECK BLACKLIST STATUS</Blacklist>
              </MapColumn>
            </Panel>
          </Result>
          <Watermark>
            <WatermarkTitle>Activer Windows</WatermarkTitle>
            Accédez aux paramètres pour activer Windows.
          </Watermark>
        </Page>
        <Scrollbar><Arrow /><Thumb /><Arrow $down /></Scrollbar>
      </Viewport>
      <Taskbar>
        <Start>
          <svg width="16" height="16" viewBox="0 0 16 16"><path d="M0 2.200 6.700 1.300v6.200H0ZM7.500 1.200 16 0v7.500H7.500ZM0 8.400h6.700v6.300L0 13.800ZM7.500 8.400H16V16l-8.500-1.200Z" fill="#fff" /></svg>
        </Start>
        <TaskSearch>
          <Line w={17} h={17} d="M1 16l6-6M6 6a5 5 0 1 0 10 0A5 5 0 1 0 6 6" c="#1c1c1c" s={1.400} />
          <TaskSearchText>Taper ici pour rechercher</TaskSearchText>
          <SearchScene />
        </TaskSearch>
        <TaskIcon><Line w={16} h={16} d="M.7.500v2.200h10V.500M.7 15.500v-2.200h10v2.200M.7 5h10v6H.7ZM14.500.500v4M14.500 8.500v7M14.500 6v1" c="#fff" s={1.200} strokeLinecap="butt" /></TaskIcon>
        <Gap $w={2} />
        <TaskIcon><Edge /></TaskIcon>
        <TaskIcon $open><Explorer /></TaskIcon>
        <TaskIcon><Mail /></TaskIcon>
        <TaskIcon>
          <svg width="24" height="24" viewBox="0 0 24 24"><path d="M0 0h24v24H0Z" fill="#0061fe" /><FaDropbox x="4.500" y="4.500" size={15} color="#fff" /></svg>
        </TaskIcon>
        <TaskIcon $open><Wps /></TaskIcon>
        <TaskIcon><KeepApp /></TaskIcon>
        <TaskIcon $open><FaWhatsapp size={27} color="#25d366" /><CountBadge>53</CountBadge></TaskIcon>
        <TaskIcon $open $focus><BraveMark w={21} h={25} /></TaskIcon>
        <TaskIcon $open><Idea /></TaskIcon>
        <TaskIcon $open><Git /></TaskIcon>
        <TaskIcon $open><Terminal /></TaskIcon>
        <Tray>
          <Sun />
          <Temp>29°C</Temp>
          <Line w={13} h={8} d="M1 7l5.500-5.500L12 7" c="#fff" s={1.200} />
          <Gap $w={9} />
          <Line w={17} h={14} d="M6 3h9.500v8.500H5.500V9M16.500 6v2.500M1 3.500h4.500v2c0 3-4.500 3-4.500 0ZM2 1v2M4.500 1v2M3.300 8v3h2M8 5.500h5.500v4H8ZM8 7.500h5.500" c="#fff" s={1.200} />
          <Gap $w={7} />
          <Line w={17} h={14} d="M1 5h2.500L7 1.500v11L3.500 9H1ZM9.500 4.500c1 1.500 1 3.500 0 5M12 3c1.700 2.500 1.700 5.500 0 8M14.300 1.500c2.500 3.500 2.500 7.500 0 11" c="#fff" s={1.100} />
          <Gap $w={10} />
          <Line w={14} h={14} d="M1.500 13C1 6 6 1 13 1.500M4.500 13C4 8 8 4 13 4.500M7.500 13c0-3 2-5.500 5.500-5.500M10.500 13c0-1.500 1-2.500 2.500-2.500M12 12.500h1" c="#dedad4" s={1.200} />
          <Lang>FRA</Lang>
          <Clock>16:48<br />16/01/2024</Clock>
          <Gap $w={17} />
          <Line w={17} h={17} d="M1 1h15v12h-4.500l-3 3v-3H1Z" c="#fff" s={1.300} />
          <DesktopEdge />
        </Tray>
      </Taskbar>
    </Screen>
  );
}
